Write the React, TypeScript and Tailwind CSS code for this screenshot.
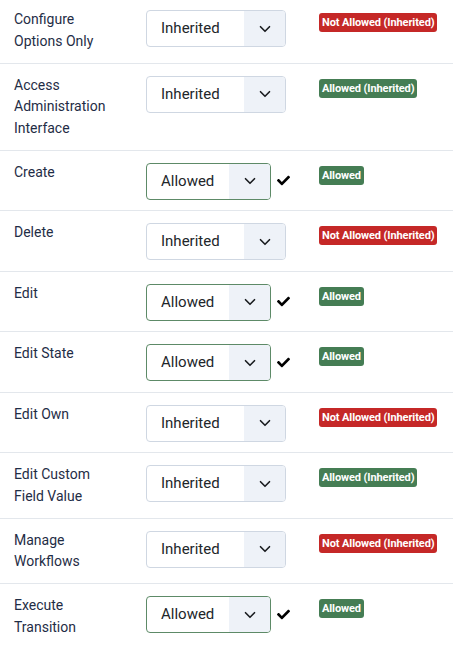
import { ChevronDown } from 'lucide-react';

type Setting = 'Inherited' | 'Allowed';

interface PermissionRow {
  label: string[];
  setting: Setting;
  result: 'allowed' | 'allowedInherited' | 'deniedInherited';
}

const rows: PermissionRow[] = [
  { label: ['Configure', 'Options Only'], setting: 'Inherited', result: 'deniedInherited' },
  { label: ['Access', 'Administration', 'Interface'], setting: 'Inherited', result: 'allowedInherited' },
  { label: ['Create'], setting: 'Allowed', result: 'allowed' },
  { label: ['Delete'], setting: 'Inherited', result: 'deniedInherited' },
  { label: ['Edit'], setting: 'Allowed', result: 'allowed' },
  { label: ['Edit State'], setting: 'Allowed', result: 'allowed' },
  { label: ['Edit Own'], setting: 'Inherited', result: 'deniedInherited' },
  { label: ['Edit Custom', 'Field Value'], setting: 'Inherited', result: 'allowedInherited' },
  { label: ['Manage', 'Workflows'], setting: 'Inherited', result: 'deniedInherited' },
  { label: ['Execute', 'Transition'], setting: 'Allowed', result: 'allowed' },
];

// heavy check mark
function CheckMark() {
  return (
    <svg viewBox="0 0 512 512" className="ml-[6px] h-[13px] w-[13px] text-black" fill="currentColor">
      <path d="M173.9 439.4l-166.4-166.4c-10-10-10-26.2 0-36.2l36.2-36.2c10-10 26.2-10 36.2 0L192 312.7 432.1 72.6c10-10 26.2-10 36.2 0l36.2 36.2c10 10 10 26.2 0 36.2l-294.4 294.4c-10 10-26.2 10-36.2 0z" />
    </svg>
  );
}

function SettingSelect({ value }: { value: Setting }) {
  const allowed = value === 'Allowed';
  return (
    <div
      className={`mt-[1px] flex h-[37px] overflow-hidden rounded-[4px] border bg-white ${
        allowed ? 'w-[125px] border-[#5d8a67]' : 'w-[140px] border-[#cfd7e2]'
      }`}
    >
      <span className="flex flex-1 items-center pl-[14px] text-[15px] text-[#22262a]">{value}</span>
      <span className="flex w-[41px] items-center justify-center bg-[#eef2f8]">
        <ChevronDown className="h-[18px] w-[18px] text-[#1b1e21]" strokeWidth={2.2} />
      </span>
    </div>
  );
}

function ResultBadge({ result }: { result: PermissionRow['result'] }) {
  const map = {
    allowed: { text: 'Allowed', color: 'bg-[#457d54]' },
    allowedInherited: { text: 'Allowed (Inherited)', color: 'bg-[#457d54]' },
    deniedInherited: { text: 'Not Allowed (Inherited)', color: 'bg-[#c52827]' },
  }[result];
  return (
    <span
      className={`mt-[3px] inline-block rounded-[3px] px-[3px] py-[2px] text-[11px] font-bold leading-[15px] tracking-[-0.1px] text-white ${map.color}`}
    >
      {map.text}
    </span>
  );
}

export default function App() {
  return (
    <div
      className="w-[474px] overflow-hidden bg-white"
      style={{ fontFamily: 'Roboto, "Liberation Sans", sans-serif' }}
    >
      <div className="-mt-[2px] w-[453px]">
        {rows.map((row, i) => (
          <div
            key={i}
            className={`flex items-start pt-[11px] pb-[10.5px] ${
              i < rows.length - 1 ? 'border-b border-[#e3e7ec]' : ''
            }`}
          >
            {/* 権限名 */}
            <div className="w-[146px] pl-[14px] text-[14px] leading-[21.5px] text-[#1f2d46]">
              {row.label.map((line) => (
                <div key={line}>{line}</div>
              ))}
            </div>
            {/* 設定 */}
            <div className="flex w-[173px] items-center">
              <SettingSelect value={row.setting} />
              {row.setting === 'Allowed' && <CheckMark />}
            </div>
            {/* 計算結果 */}
            <div>
              <ResultBadge result={row.result} />
            </div>
          </div>
        ))}
      </div>
    </div>
  );
}
